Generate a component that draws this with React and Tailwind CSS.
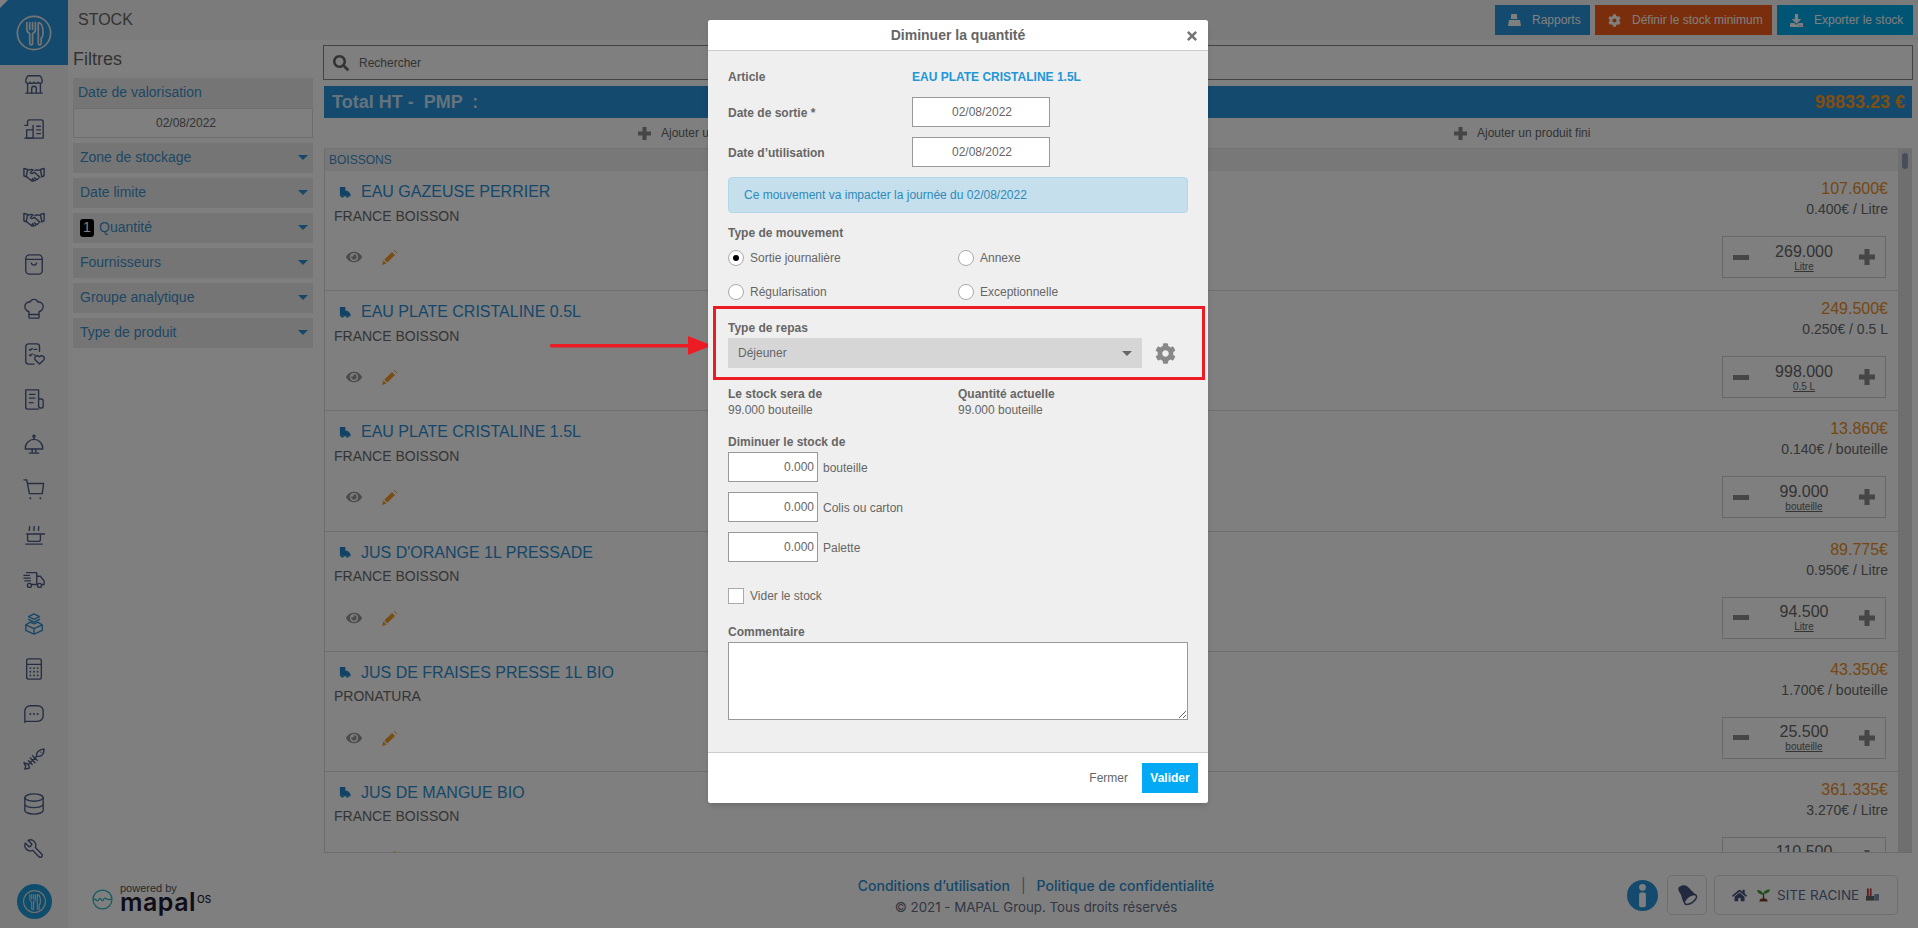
import React from 'react';
import { FaCog, FaDownload, FaEye, FaSearch, FaTimes, FaHome } from 'react-icons/fa';

const S = { fill: 'none', stroke: 'currentColor', strokeWidth: 1.5, strokeLinecap: 'round', strokeLinejoin: 'round' };
const I = ({ children, cls = 'text-[#4c5c88]' }) => (
  <svg viewBox="0 0 24 24" className={`h-[22px] w-[22px] ${cls}`} {...S}>{children}</svg>
);
const Plate = ({ cls }) => (
  <svg viewBox="0 0 40 40" className={cls} fill="none" stroke="currentColor" strokeWidth="1.8" strokeLinecap="round" strokeLinejoin="round">
    <circle cx="20" cy="20" r="17.500" />
    <path d="M12.500 9v7c0 3 1.500 4 3 4.500V31c0 2 3 2 3 0V20.500c1.500-.5 3-1.500 3-4.500V9M15.500 9v7M18.500 9v7" />
    <path d="M25 9c3 1 4.500 5 4.500 10s-1 6-2 6.500V31c0 2-3 2-3 0V9.500" />
  </svg>
);
const Shake = () => (
  <I>
    <path d="M1 6l4 1-1.500 8L1 14ZM23 6l-4 1 1.500 8 2.500-1Z" />
    <path d="M5 8l4-1 2 .5-3 3c1 1.500 3 1 4.500-.5l6 5.500M19 8l-4-.5-2 .5" />
    <path d="M4 15l5 4c1 1 2 1 3 0 1 .5 2 0 2.500-1 1 0 2-.5 2.500-1.500M9 19l1.500-1.500M12 19l-1.500-2M14.500 18l-2-2" />
  </I>
);
const icons = [
  <I key="a"><path d="M3 22h18M5 11v11M19 11v11M3 9c0-1 1-6 3-6h12c2 0 3 5 3 6 0 3-3.500 3-4.500 1-1 2-3.500 2-4.500 0-1 2-3.500 2-4.500 0C8 12 3 12 3 9Z" /><path d="M9.500 22v-5a2.500 2.500 0 0 1 5 0v5" /></I>,
  <I key="b"><path d="M5 8V4a2 2 0 0 1 2-2h13a2 2 0 0 1 2 2v18H2" /><path d="M5 8H2M4 13h7v9H4zM11 8v14M15 9h4M15 13h4M15 17h4" /></I>,
  <Shake key="c" />,
  <Shake key="d" />,
  <I key="e"><rect x="3" y="2" width="18" height="21" rx="4" /><path d="M3 7h18M9 11c1 3 5 3 6 0" /></I>,
  <I key="f"><path d="M7 22h10a1 1 0 0 0 .500-1v-6c3-1 4.500-3 4.500-6 0-3-3-5-5.500-4.500C15.500 2.500 13.500 1.500 12 1.500S8.500 2.500 7.500 4.500C5 4 2 6 2 9c0 3 1.500 5 4.500 6v6a1 1 0 0 0 .500 1ZM6.500 18h11" /></I>,
  <I key="g"><path d="M12 23H6a3 3 0 0 1-3-3V4a3 3 0 0 1 3-3h9a3 3 0 0 1 3 3v5M7 7l1 1 2-2M12 7h3M7 13l1 1 2-2M12 13h1" /><path d="M18 23l-4.500-4.500c-2.500-3 1.500-6 4.500-3.500 3-2.500 7 .5 4.500 3.500Z" /></I>,
  <I key="h"><path d="M17 23H5a2 2 0 0 1-2-2V2h14v17a3 3 0 0 0 3 3 2 2 0 0 0 2-2v-6a2 2 0 0 0-2-2h-3M7 7h6M7 11h6M7 16h4" /></I>,
  <I key="i"><path d="M2.500 16.500a9.500 9.500 0 0 1 19 0v1h-19zM12 7V4.500" /><circle cx="12" cy="3.500" r="1.200" /><path d="M10 17.500v4M14 17.500v4M7 22h10" /></I>,
  <I key="j"><path d="M1 2h3l3 15h14l1.500-11H5" /><path d="M8 22h.01M19 22h.01" strokeWidth="2.200" /></I>,
  <I key="k"><path d="M4 12h20M5 12v6a2 2 0 0 0 2 2h10a2 2 0 0 0 2-2v-6M3 23h18M7 8c-1-1.500 1-2 0-4M12 8c-1-1.500 1-2 0-4M17 8c-1-1.500 1-2 0-4" /></I>,
  <I key="l"><path d="M4 5h11v13h-6M15 9h4l4 5v4h-2M15 18h1M1 8h6M1 11h7M2 14h6" /><circle cx="7" cy="19" r="2.200" /><circle cx="18" cy="19" r="2.200" /></I>,
  <I key="m" cls="text-[#2f8ed0]"><path d="M12 1l6 3-6 3-6-3zM6 7l6 3 6-3M3 13l9 4 9-4v6l-9 4-9-4zM12 17v6M3 13l5-3 4 2 4-2 5 3" /></I>,
  <I key="n"><rect x="4" y="1" width="16" height="22" rx="2" /><path d="M4 7h16" /><path d="M8 11h.01M12 11h.01M16 11h.01M8 15h.01M12 15h.01M16 15h.01M8 19h.01M12 19h.01M16 19h.01" strokeWidth="2" /></I>,
  <I key="o"><path d="M2 21V9a6 6 0 0 1 6-6h8a6 6 0 0 1 6 6v5a6 6 0 0 1-6 6H3Z" /><path d="M8 12h.01M12 12h.01M16 12h.01" strokeWidth="2.200" /></I>,
  <I key="p"><path d="M15 9C14 5 17 2 23 1c0 6-3 9-8 8ZM19.500 4.500h.01M15 9l-9 9M10.500 8.500l5 5M8 11l5 5M6 14l4 4M6 18l-5-2 2 4-1 3 5-1Z" /></I>,
  <I key="q"><ellipse cx="12" cy="5" rx="10" ry="4" /><path d="M2 5v14c0 2.200 4.500 4 10 4s10-1.800 10-4V5M2 12c0 2.200 4.500 4 10 4s10-1.800 10-4" /></I>,
  <I key="r"><g transform="translate(24 0) scale(-1 1)"><path d="M14.700 6.300a1 1 0 0 0 0 1.400l1.600 1.600a1 1 0 0 0 1.400 0l3.770-3.770a6 6 0 0 1-7.940 7.940l-6.910 6.910a2.120 2.120 0 0 1-3-3l6.910-6.910a6 6 0 0 1 7.940-7.940l-3.760 3.760z" /></g></I>,
];

const Truck = () => (
  <svg viewBox="0 0 14 13" className="h-[11px] w-[12px] text-[#2485c8]" fill="currentColor">
    <path d="M1 0h6.500v4.500H10L13.500 8v3h-1.700a1.900 1.900 0 0 0-3.600 0H5.800a1.900 1.900 0 0 0-3.600 0H1Z" />
    <circle cx="4" cy="11" r="1.600" /><circle cx="10" cy="11" r="1.600" />
  </svg>
);
const Pencil = () => (
  <svg viewBox="0 0 16 16" className="h-[16px] w-[16px] text-[#f59a23]" fill="currentColor">
    <path d="M0 16l1.400-4.600 3.200 3.200Z" /><path d="M2.300 10.500L10 3l3 3-7.600 7.600Z" />
    <path d="M12 1l3 3" fill="none" stroke="currentColor" strokeWidth="1" />
  </svg>
);
const Minus = () => <svg viewBox="0 0 16 5" className="h-[5px] w-[16px] text-[#8c8c8c]" fill="currentColor"><rect width="16" height="5" /></svg>;
const Plus = ({ cls = 'h-[16px] w-[16px]' }) => (
  <svg viewBox="0 0 16 16" className={`${cls} text-[#8c8c8c]`} fill="currentColor"><path d="M5.500 0h5v5.500H16v5h-5.500V16h-5v-5.500H0v-5h5.500Z" /></svg>
);
const Caret = ({ cls }) => (
  <svg viewBox="0 0 10 5" className={`h-[5px] w-[10px] ${cls}`} fill="currentColor"><path d="M0 0h10L5 5Z" /></svg>
);

const rows = [
  ['EAU GAZEUSE PERRIER', 'FRANCE BOISSON', '107.600€', '0.400€ / Litre', '269.000', 'Litre'],
  ['EAU PLATE CRISTALINE 0.5L', 'FRANCE BOISSON', '249.500€', '0.250€ / 0.5 L', '998.000', '0.5 L'],
  ['EAU PLATE CRISTALINE 1.5L', 'FRANCE BOISSON', '13.860€', '0.140€ / bouteille', '99.000', 'bouteille'],
  ["JUS D'ORANGE 1L PRESSADE", 'FRANCE BOISSON', '89.775€', '0.950€ / Litre', '94.500', 'Litre'],
  ['JUS DE FRAISES PRESSE 1L BIO', 'PRONATURA', '43.350€', '1.700€ / bouteille', '25.500', 'bouteille'],
  ['JUS DE MANGUE BIO', 'FRANCE BOISSON', '361.335€', '3.270€ / Litre', '110.500', 'Litre'],
];

const filters = ['Zone de stockage', 'Date limite', 'Quantité', 'Fournisseurs', 'Groupe analytique', 'Type de produit'];

const Row = ({ d }) => (
  <div className="flex h-[120.2px] shrink-0 justify-between border-b border-[#dcdcdc]">
    <div className="flex flex-col pl-[9px]">
      <div className="mt-[9px] flex h-[24px] items-center pl-[5px]">
        <Truck />
        <span className="ml-[10px] text-[16px] text-[#2a8fd4]">{d[0]}</span>
      </div>
      <div className="mt-[3px] flex h-[18px] items-center text-[14px] text-[#6a6a6a]">{d[1]}</div>
      <div className="mt-[20px] flex h-[24px] items-center gap-[20px] pl-[12px]">
        <FaEye className="h-[16px] w-[16px] text-[#999]" />
        <Pencil />
      </div>
    </div>
    <div className="flex flex-col items-end pr-[10px]">
      <div className="mt-[7px] h-[22px] text-[16px] leading-[22px] text-[#ec8f26]">{d[2]}</div>
      <div className="h-[18px] text-[14px] leading-[18px] text-[#6a6a6a]">{d[3]}</div>
      <div className="mr-[2px] mt-[18px] flex h-[42px] w-[164px] items-center justify-between border border-[#d0d0d0] px-[10px]">
        <Minus />
        <div className="flex flex-col items-center leading-none text-[#666]">
          <span className="text-[16px] leading-[18px]">{d[4]}</span>
          <span className="text-[10px] leading-[11px] underline">{d[5]}</span>
        </div>
        <Plus />
      </div>
    </div>
  </div>
);

const Label = ({ children, cls = '' }) => (
  <div className={`h-[16px] text-[12px] font-bold leading-[16px] text-[#666] ${cls}`}>{children}</div>
);
const DateInput = () => (
  <div className="flex h-[30px] w-[138px] items-center justify-center border border-[#999] bg-white pl-[2px] text-[12px] text-[#666]">02/08/2022</div>
);
const Radio = ({ on, label }) => (
  <div className="flex h-[16px] items-center gap-[6px] text-[12px] text-[#666]">
    <span className="flex h-[16px] w-[16px] items-center justify-center rounded-full border border-[#aaa] bg-white">
      {on && <span className="h-[6px] w-[6px] rounded-full bg-black" />}
    </span>
    {label}
  </div>
);
const Qty = ({ label }) => (
  <div className="flex h-[30px] items-center">
    <div className="flex h-[30px] w-[90px] items-center justify-end border border-[#999] bg-white pr-[3px] text-[12px] text-[#666]">0.000</div>
    <span className="ml-[5px] mt-[2px] text-[12px] text-[#666]">{label}</span>
  </div>
);

export default function App() {
  return (
    <div className="relative flex h-[928px] w-[1918px] overflow-hidden bg-white font-['Liberation_Sans',Arial,sans-serif]">
      <aside className="flex w-[68px] shrink-0 flex-col items-center bg-[#f4f4f4]">
        <div className="relative flex h-[65px] w-full shrink-0 items-center justify-center bg-[#2694dc] text-white">
          <svg viewBox="0 0 8 8" className="absolute left-0 top-0 h-[8px] w-[8px] text-white" fill="currentColor"><path d="M0 0h8L0 8Z" /></svg>
          <Plate cls="h-[38px] w-[38px] text-[#e8e8e8]" />
        </div>
        <div className="flex flex-col items-center gap-[23px] pt-[8px]">{icons}</div>
        <div className="mb-[9px] mt-auto flex h-[35px] w-[35px] items-center justify-center rounded-full bg-[#1f9ad8]">
          <Plate cls="h-[25px] w-[25px] text-[#ddd]" />
        </div>
      </aside>

      <main className="flex min-w-0 flex-1 flex-col">
        <header className="flex h-[40px] shrink-0 items-center justify-between bg-[#f6f6f6] pl-[10px] pr-[5px]">
          <span className="text-[16px] text-[#666]">STOCK</span>
          <div className="flex gap-[5px] text-[12px] text-white">
            <div className="flex h-[30px] w-[95px] items-center gap-[11px] bg-[#2694dc] pl-[13px]">
              <svg viewBox="0 0 14 13" className="h-[12px] w-[13px]" fill="currentColor"><path d="M3.500 0h6l.5 5.500H3Z" /><path d="M1 6.500h12L14 13H0Z" /></svg>
              Rapports
            </div>
            <div className="flex h-[30px] w-[177px] items-center gap-[11px] bg-[#f55c16] pl-[13px]"><FaCog className="h-[13px] w-[13px]" />Définir le stock minimum</div>
            <div className="flex h-[30px] w-[136px] items-center gap-[11px] bg-[#00a8e8] pl-[13px]"><FaDownload className="h-[13px] w-[13px]" />Exporter le stock</div>
          </div>
        </header>

        <div className="flex min-h-0 flex-1">
          <div className="flex w-[255px] shrink-0 flex-col pl-[5px]">
            <div className="flex h-[38px] items-center text-[18px] text-[#666]">Filtres</div>
            <div className="flex h-[30px] w-[240px] items-center bg-[#ebebeb] pb-[1px] pl-[5px] text-[14px] text-[#3d8fc9]">Date de valorisation</div>
            <div className="flex h-[30px] w-[240px] items-center justify-center border border-[#ddd] pr-[14px] text-[12px] text-[#666]">02/08/2022</div>
            <div className="mt-[5px] flex flex-col gap-[5px]">
              {filters.map((f) => (
                <div key={f} className="flex h-[30px] w-[240px] items-center justify-between bg-[#ebebeb] pb-[1px] pl-[7px] pr-[5px] text-[14px] text-[#3d8fc9]">
                  <span className="flex items-center">
                    {f === 'Quantité' && <span className="mr-[5px] flex h-[18px] w-[14px] items-center justify-center rounded-[3px] bg-black text-[14px] text-white">1</span>}
                    {f}
                  </span>
                  <Caret cls="text-[#2a8fd4]" />
                </div>
              ))}
            </div>
          </div>

          <div className="flex min-w-0 flex-1 flex-col pr-[5px] pt-[5px]">
            <div className="flex h-[35px] shrink-0 items-center border border-[#888] pl-[9px] text-[12px] text-[#666]">
              <FaSearch className="mr-[10px] h-[16px] w-[16px] text-[#666]" />Rechercher
            </div>
            <div className="mx-px mt-[6px] flex h-[32px] shrink-0 items-center justify-between bg-[#2694dc] pl-[8px] pr-[7px] text-[18px] font-bold">
              <span className="whitespace-pre text-[#c8e6fa]">{'Total HT -  PMP  :'}</span>
              <span className="text-[#ff9f1c]">98833.23 €</span>
            </div>
            <div className="mx-px grid h-[31px] shrink-0 grid-cols-2 border-b border-[#e4e4e4] text-[12px] text-[#666]">
              <div className="flex items-center gap-[10px] pl-[314px]"><Plus cls="h-[13px] w-[13px]" />Ajouter un produit</div>
              <div className="flex items-center gap-[10px] pl-[336px]"><Plus cls="h-[13px] w-[13px]" />Ajouter un produit fini</div>
            </div>
            <div className="mx-px flex min-h-0 flex-1 border-b border-l border-[#d8d8d8]">
              <div className="min-w-0 flex-1 overflow-hidden">
                <div className="flex h-[22px] items-center bg-[#f0f0f0] pl-[4px] text-[12px] text-[#3d8fc9]">BOISSONS</div>
                {rows.map((d) => <Row key={d[0]} d={d} />)}
              </div>
              <div className="w-[14px] shrink-0 bg-[#dedede] pl-[4px] pt-[4px]"><div className="h-[16px] w-[6px] rounded-full bg-[#8f9bb5]" /></div>
            </div>
          </div>
        </div>

        <footer className="grid h-[75px] shrink-0 grid-cols-[790px_356px_1fr] items-center">
          <div className="flex items-center pl-[24px] pt-[18px]">
            <svg viewBox="0 0 40 40" className="h-[21px] w-[21px] text-[#2fb8c0]" fill="none" stroke="currentColor" strokeWidth="2.500">
              <circle cx="20" cy="20" r="18" /><path d="M2 22c5-8 7 6 11-2s5 8 9 0 6 6 16-2" />
            </svg>
            <div className="ml-[7px] flex h-[36px] flex-col">
              <span className="text-[11px] leading-[12px] text-[#555]">powered by</span>
              <span className="-mt-[1px] flex items-start font-['Inter',sans-serif] text-[25px] font-semibold leading-[18px] tracking-[0.5px] text-[#1e1a30]">mapal<span className="ml-[1px] mt-[1px] text-[10px] font-medium leading-[10px] tracking-normal">OS</span></span>
            </div>
          </div>
          <div className="flex flex-col items-center pt-[11px] font-['Inter',sans-serif]">
            <div className="flex h-[18px] items-center whitespace-nowrap text-[14px] font-medium text-[#2a8fd4]"><span>Conditions d’utilisation</span><span className="mx-[11px] font-normal text-[#6f93ad]">|</span><span>Politique de confidentialité</span></div>
            <div className="mt-[4px] h-[18px] whitespace-nowrap text-[13.3px] leading-[18px] text-[#666e85]">© 2021 - MAPAL Group. Tous droits réservés</div>
          </div>
          <div className="flex items-center justify-end gap-[7px] pr-[20px] pt-[9px]">
            <svg viewBox="0 0 32 32" className="mr-[2px] h-[31px] w-[31px]">
              <circle cx="16" cy="16" r="16" fill="#2694dc" /><circle cx="16" cy="7.500" r="3.500" fill="#fff" /><rect x="12.500" y="13" width="7" height="15" rx="2" fill="#fff" />
            </svg>
            <div className="flex h-[40px] w-[40px] items-center justify-center rounded-[5px] border border-[#ddd]">
              <svg viewBox="0 0 24 24" className="h-[24px] w-[24px]">
                <path d="M4 4c4-3 8-2 10 1l7 7c1 3-9 10-12 8-2-3-2-6-3-8-1-3-4-5-2-8Z" fill="#46557f" /><ellipse cx="15.500" cy="16.500" rx="7" ry="3.500" transform="rotate(-35 15.500 16.500)" fill="#fff" stroke="#46557f" strokeWidth="1.500" />
              </svg>
            </div>
            <div className="flex h-[40px] w-[184px] items-center rounded-[5px] border border-[#ddd] pl-[17px] font-['Inter',sans-serif] text-[13.5px] text-[#5c6a90]">
              <FaHome className="h-[15px] w-[15px] text-[#46557f]" />
              <svg viewBox="0 0 14 14" className="ml-[10px] mr-[7px] h-[14px] w-[13px]">
                <path d="M7 13V5" stroke="#3a6a20" strokeWidth="1.500" /><path d="M7 6.500C6 3 3 1.500 0 1.500c.5 3.500 4 5 7 5ZM7 5.500C7 3 10 1 14 1c-.5 3.500-4 4.500-7 4.500Z" fill="#3aa02c" /><path d="M2.500 14c0-2.500 2-3.500 4.500-3.500s4.500 1 4.500 3.500Z" fill="#7a4020" />
              </svg>
              SITE RACINE
              <svg viewBox="0 0 14 14" className="ml-[7px] h-[14px] w-[13px]"><rect x="1" y="0" width="2" height="8" fill="#c03a3a" /><rect x="4" y="0" width="2" height="8" fill="#c03a3a" /><rect x="0" y="8" width="9" height="5" fill="#666" /><rect x="9" y="6" width="5" height="7" fill="#7a90b0" /></svg>
            </div>
          </div>
        </footer>
      </main>

      <div className="absolute inset-0 bg-black/50" />

      <svg viewBox="0 0 162 20" className="absolute left-[550px] top-[336px] h-[20px] w-[162px] text-[#ed1c24]" fill="currentColor">
        <rect x="0" y="8" width="140" height="3.500" rx="1.500" /><path d="M138 0l24 9.500-24 9.500Z" />
      </svg>

      <div className="absolute left-[708px] top-[20px] flex h-[783px] w-[500px] flex-col overflow-hidden rounded-[3px] bg-[#efefef] text-[12px] shadow-md">
        <div className="relative flex h-[31px] shrink-0 items-center justify-center border-b border-[#ccc] bg-white text-[14px] font-bold text-[#666]">
          Diminuer la quantité
          <FaTimes className="absolute right-[10px] top-[9px] h-[14px] w-[12px] text-[#777]" />
        </div>
        <div className="flex flex-1 flex-col px-[20px] pt-[16px]">
          <div className="flex h-[20px] items-center">
            <span className="w-[184px] font-bold text-[#666]">Article</span>
            <span className="font-bold text-[#2196d8]">EAU PLATE CRISTALINE 1.5L</span>
          </div>
          <div className="mt-[10px] flex items-center"><span className="w-[184px] pt-[1px] font-bold text-[#666]">Date de sortie *</span><DateInput /></div>
          <div className="mt-[10px] flex items-center"><span className="w-[184px] pt-[1px] font-bold text-[#666]">Date d’utilisation</span><DateInput /></div>
          <div className="mt-[10px] flex h-[36px] items-center rounded-[4px] border border-[#b3d6e8] bg-[#c5dfec] pl-[15px] text-[#2f8ab8]">Ce mouvement va impacter la journée du 02/08/2022</div>
          <Label cls="mt-[12px]">Type de mouvement</Label>
          <div className="mt-[9px] grid grid-cols-[230px_230px] gap-y-[18px]">
            <Radio on label="Sortie journalière" />
            <Radio label="Annexe" />
            <Radio label="Régularisation" />
            <Radio label="Exceptionnelle" />
          </div>
          <Label cls="mt-[20px]">Type de repas</Label>
          <div className="mt-[2px] flex items-center">
            <div className="flex h-[30px] w-[414px] items-center justify-between bg-[#d6d6d6] pl-[10px] pr-[10px] text-[#666]">Déjeuner<Caret cls="text-[#666]" /></div>
            <FaCog className="ml-[13px] h-[21px] w-[21px] text-[#888]" />
          </div>
          <div className="mt-[18px] grid grid-cols-[230px_230px]">
            <div><Label>Le stock sera de</Label><div className="h-[16px] leading-[16px] text-[#666]">99.000 bouteille</div></div>
            <div><Label>Quantité actuelle</Label><div className="h-[16px] leading-[16px] text-[#666]">99.000 bouteille</div></div>
          </div>
          <Label cls="mt-[16px]">Diminuer le stock de</Label>
          <div className="mt-[2px] flex flex-col gap-[10px]">
            <Qty label="bouteille" /><Qty label="Colis ou carton" /><Qty label="Palette" />
          </div>
          <div className="mt-[26px] flex h-[16px] items-center gap-[6px] text-[#666]">
            <span className="h-[16px] w-[16px] border border-[#aaa] bg-white" />Vider le stock
          </div>
          <Label cls="mt-[20px]">Commentaire</Label>
          <textarea className="mt-[2px] h-[78px] w-[460px] shrink-0 border border-[#999] bg-white" />
        </div>
        <div className="flex h-[51px] shrink-0 items-center justify-end border-t border-[#ccc] bg-white pr-[10px]">
          <span className="mr-[14px] text-[#666]">Fermer</span>
          <div className="flex h-[30px] w-[56px] items-center justify-center bg-[#03a9f4] font-bold text-white">Valider</div>
        </div>
      </div>

      <div className="pointer-events-none absolute left-[713px] top-[306px] h-[74px] w-[492px] border-[3px] border-[#ed1c24]" />
    </div>
  );
}
